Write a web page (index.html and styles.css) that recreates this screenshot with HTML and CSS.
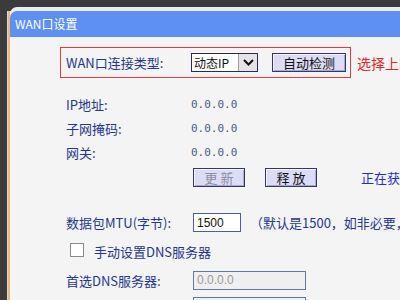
FILE: index.html
```html
<!DOCTYPE html>
<html lang="zh-CN">
<head>
    <meta charset="UTF-8">
    <meta name="viewport" content="width=device-width, initial-scale=1.0">
    <title>WAN口设置</title>
    <link rel="stylesheet" href="styles.css">
</head>
<body>
    <div class="frame">
        <div class="panel">
            <div class="panel-title">WAN口设置</div>

            <div class="panel-body">
                <div class="type-line">
                    <div class="row highlight">
                        <span class="label">WAN口连接类型:</span>
                        <div class="select">
                            <span class="select-text">动态IP</span>
                            <span class="select-arrow">
                                <svg width="11" height="7" viewBox="0 0 11 7"><path d="M1 1 L5.5 5.5 L10 1" fill="none" stroke="#111" stroke-width="2"/></svg>
                            </span>
                        </div>
                        <button class="btn detect">自动检测</button>
                    </div>
                    <span class="note-red">选择上网方式</span>
                </div>

                <div class="row info first">
                    <span class="label">IP地址:</span>
                    <span class="value">0.0.0.0</span>
                </div>
                <div class="row info">
                    <span class="label">子网掩码:</span>
                    <span class="value">0.0.0.0</span>
                </div>
                <div class="row info">
                    <span class="label">网关:</span>
                    <span class="value">0.0.0.0</span>
                </div>

                <div class="row actions">
                    <span class="label"></span>
                    <button class="btn small disabled">更 新</button>
                    <button class="btn small">释 放</button>
                    <span class="status">正在获取IP地址...</span>
                </div>

                <div class="row mtu">
                    <span class="label">数据包MTU(字节):</span>
                    <input class="field short" type="text" value="1500">
                    <span class="hint">（默认是1500，如非必要，请勿修改）</span>
                </div>

                <div class="row check">
                    <span class="box"></span>
                    <span>手动设置DNS服务器</span>
                </div>

                <div class="row dns">
                    <span class="label">首选DNS服务器:</span>
                    <input class="field wide" type="text" value="0.0.0.0" disabled>
                </div>
                <div class="row dns">
                    <span class="label">备用DNS服务器:</span>
                    <input class="field wide" type="text" value="0.0.0.0" disabled>
                    <span class="hint">（可选）</span>
                </div>
            </div>
        </div>
    </div>
</body>
</html>
```

FILE: styles.css
```css
* {
    margin: 0;
    padding: 0;
    box-sizing: border-box;
}

body {
    background-color: #3b3b3b;
    font-family: "Noto Sans CJK SC", "Liberation Sans", sans-serif;
    font-size: 13px;
    color: #23378a;
    overflow: hidden;
    white-space: nowrap;
}

.frame {
    padding: 7px 0 0 8px;
}

.panel {
    background: #f4f4f4;
    border-left: 2px solid #f1b577;
    box-shadow: -1px 0 0 #d8d8d8;
    height: 320px;
}

.panel-title {
    margin-top: 4px;
    height: 26px;
    line-height: 26px;
    padding-left: 5px;
    background: #5e8ff2;
    color: #fff;
    font-size: 12px;
    border-top-left-radius: 7px;
    box-shadow: 0 -4px 0 #ececec;
}

.panel-body {
    padding: 10px 0 0 50px;
}

.row {
    display: flex;
    align-items: center;
    height: 24px;
    padding-left: 6px;
}

.row > * {
    flex-shrink: 0;
}

.label {
    width: 125px;
}

/* connection type line */
.type-line {
    display: flex;
    align-items: center;
    gap: 6px;
}

.type-line > * {
    flex-shrink: 0;
}

.row.highlight {
    width: 291px;
    height: 31px;
    padding-left: 5px;
    border: 1px solid #e33b3b;
}

.select {
    display: flex;
    align-items: center;
    width: 67px;
    height: 19px;
    background: #fff;
    border: 1px solid #2b2b4a;
}

.select-text {
    flex: 1;
    padding-left: 2px;
    color: #111;
    font-size: 12px;
    line-height: 17px;
}

.select-arrow {
    width: 19px;
    height: 17px;
    display: flex;
    align-items: center;
    justify-content: center;
    background: #e4e4e8;
    border-left: 1px solid #9a9aa8;
}

.btn {
    font-family: "Noto Sans CJK SC", sans-serif;
    background: #dcdcf7;
    color: #111;
    border: 1px solid #35356a;
    box-shadow: inset 1px 1px 0 #f4f4ff, inset -1px -1px 0 #a8a8d0;
    height: 19px;
    font-size: 13px;
    line-height: 16px;
}

.btn.detect {
    width: 74px;
    margin-left: 14px;
}

.note-red {
    color: #e32626;
    font-size: 14px;
}

/* address info */
.row.first {
    margin-top: 14px;
}

.value {
    font-family: "DejaVu Sans Mono", monospace;
    font-size: 11px;
    color: #4c5b8c;
}

.row.actions {
    height: 27px;
}

.btn.small {
    width: 52px;
    margin-left: 2px;
    margin-right: 18px;
}

.btn.disabled {
    color: #8c8c9c;
}

.status {
    margin-left: 26px;
    color: #1f2fc4;
}

/* mtu and dns */
.row.mtu {
    margin-top: 19px;
    height: 25px;
}

.field {
    height: 19px;
    margin-left: 2px;
    border: 1px solid #4f5f95;
    background: #fff;
    font-family: "Liberation Sans", sans-serif;
    font-size: 12px;
    padding-left: 3px;
    color: #111;
}

.field.short {
    width: 48px;
}

.field.wide {
    width: 113px;
}

.field:disabled {
    background: #efefef;
    color: #9a9a9a;
    border-color: #6676aa;
}

.hint {
    margin-left: 9px;
}

.row.check {
    margin-top: 4px;
    height: 25px;
    padding-left: 10px;
    gap: 10px;
}

.box {
    width: 14px;
    height: 14px;
    background: #fff;
    border: 1px solid #8a8a8a;
    margin-top: -4px;
}

.row.dns {
    margin-top: 3px;
    height: 26px;
}

.row.dns + .row.dns {
    margin-top: 0;
}
```
